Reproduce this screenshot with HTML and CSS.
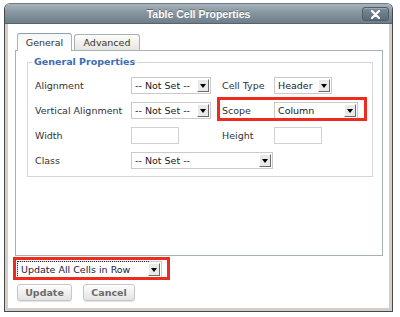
FILE: index.html
```html
<!DOCTYPE html>
<html>
<head>
<meta charset="utf-8">
<link rel="stylesheet" href="styles.css">
</head>
<body>
<div class="dialog">
  <div class="titlebar">
    <span></span>
    <div class="title">Table Cell Properties</div>
    <div class="close"><svg width="11" height="9" viewBox="0 0 11 9"><path d="M2 1 L9 8 M9 1 L2 8" stroke="#fff" stroke-width="2.2" stroke-linecap="round"/></svg></div>
  </div>
  <div class="body">
    <div class="tabs">
      <div class="tab active">General</div>
      <div class="tab">Advanced</div>
    </div>
    <div class="panel">
      <fieldset class="group">
        <legend>General Properties</legend>
        <div class="grid">
          <label>Alignment</label>
          <div class="select w80"><span>-- Not Set --</span><i></i></div>
          <label>Cell Type</label>
          <div class="select w58"><span>Header</span><i></i></div>

          <label>Vertical Alignment</label>
          <div class="select w80"><span>-- Not Set --</span><i></i></div>
          <div class="scope">
            <label>Scope</label>
            <div class="select w84"><span>Column</span><i></i></div>
          </div>

          <label>Width</label>
          <div class="input"></div>
          <label>Height</label>
          <div class="input"></div>

          <label>Class</label>
          <div class="select w142 span2"><span>-- Not Set --</span><i></i></div>
        </div>
      </fieldset>
    </div>
    <div class="footer">
      <div class="hl">
        <div class="select focus w145"><span>Update All Cells in Row</span><i></i></div>
      </div>
      <div class="buttons">
        <button class="btn w55">Update</button>
        <button class="btn w52">Cancel</button>
      </div>
    </div>
  </div>
</div>
</body>
</html>
```
FILE: styles.css
```css
body {
  margin: 0;
  background: #fff;
  font-family: "DejaVu Sans", Verdana, sans-serif;
  font-size: 9.5px;
  color: #333;
}
.dialog {
  width: 387px;
  margin: 3px 0 0 4px;
  border: 1px solid #45494c;
  border-top-color: #6f7b84;
  border-radius: 6px 6px 0 0;
  overflow: hidden;
}
.titlebar {
  height: 19px;
  border-bottom: 1px solid #55636d;
  background: linear-gradient(#a7b3bb, #8796a0 45%, #6e7e89);
  display: grid;
  grid-template-columns: 1fr auto 1fr;
  align-items: center;
}
.title {
  color: #fff;
  font: bold 10.5px "Liberation Sans", Arial, sans-serif;
  text-shadow: 0 -1px 0 rgba(0,0,0,.35);
}
.close {
  justify-self: end;
  margin-right: 3px;
  margin-top: 1px;
  width: 25px;
  height: 12px;
  border: 1px solid #4f5d67;
  border-radius: 3px;
  background: linear-gradient(#7d8d98, #5b6b76);
  box-shadow: inset 0 1px 0 rgba(255,255,255,.25);
  display: flex;
  align-items: center;
  justify-content: center;
}
.body {
  border: 3px solid #d6cec6;
  border-top: 0;
  padding: 9px 6px 7px 7px;
  background: #fff;
}
.tabs {
  display: flex;
  gap: 2px;
  padding-left: 2px;
  align-items: flex-end;
  height: 18px;
  margin-bottom: -1px;
  position: relative;
  z-index: 1;
}
.tab {
  box-sizing: border-box;
  width: 66px;
  height: 16px;
  margin-bottom: 1px;
  border: 1px solid #a6b3b5;
  border-bottom: 0;
  border-radius: 3px 3px 0 0;
  background: linear-gradient(#fdfdfc, #e7e5de);
  display: flex;
  align-items: center;
  justify-content: center;
  color: #333;
}
.tab.active {
  width: 55px;
  height: 18px;
  margin-bottom: 0;
  border-top-color: #8a9fb3;
  background: linear-gradient(#f6f7f8, #fff);
  padding-bottom: 1px;
}
.panel {
  box-sizing: border-box;
  height: 206px;
  border: 1px solid #a6b3b5;
  padding-top: 5px;
}
.group {
  margin: 0 9px 0 11px;
  border: 1px solid #d6d6d6;
  padding: 9px 7px 7px 7px;
  min-width: 0;
}
.group legend {
  padding: 0 2px;
  margin-left: -3px;
  line-height: 12px;
  font-weight: bold;
  color: #3b6db3;
}
.grid {
  display: grid;
  grid-template-columns: 96px 91px 52px auto;
  grid-auto-rows: 17px;
  row-gap: 8px;
  align-items: center;
}
.grid label {
  white-space: nowrap;
  color: #333;
}
.select {
  box-sizing: border-box;
  height: 17px;
  display: flex;
  border: 1px solid #cacaca;
  background: #fff;
}
.select span {
  flex: 1;
  padding-left: 3px;
  line-height: 15px;
  color: #222;
  white-space: nowrap;
  overflow: hidden;
}
.select i {
  box-sizing: border-box;
  width: 12px;
  margin: 1px 1px 1px 0;
  background: #e9e9e9;
  border-top: 1px solid #fff;
  border-left: 1px solid #fff;
  border-right: 1px solid #6c6c6c;
  border-bottom: 1px solid #6c6c6c;
  display: flex;
  align-items: center;
  justify-content: center;
}
.select i::after {
  content: "";
  border-top: 4px solid #000;
  border-left: 3px solid transparent;
  border-right: 3px solid transparent;
}
.w80 { width: 80px; }
.w58 { width: 58px; }
.w84 { width: 84px; }
.w142 { width: 142px; }
.w145 { width: 145px; }
.span2 { grid-column: 2 / 4; }
.input {
  box-sizing: border-box;
  width: 48px;
  height: 17px;
  border: 1px solid #d0d0d0;
  background: #fff;
}
.scope {
  grid-column: 3 / 5;
  justify-self: start;
  display: flex;
  align-items: center;
  position: relative;
}
.scope label { width: 52px; }
.scope::before,
.hl::before {
  content: "";
  position: absolute;
  border: 3px solid #ee2b1f;
}
.scope::before {
  left: -5px;
  right: -9px;
  top: -5px;
  bottom: -2px;
}
.footer {
  padding-top: 5px;
}
.hl {
  position: relative;
  width: 145px;
  margin-left: 2px;
}
.hl::before {
  left: -4px;
  right: -8px;
  top: -4px;
  bottom: -2px;
}
.select.focus span {
  outline: 1px dotted #333;
  outline-offset: 0;
  color: #1c2040;
}
.buttons {
  display: flex;
  gap: 11px;
  margin-top: 6px;
  padding-left: 2px;
}
.btn {
  box-sizing: border-box;
  height: 17px;
  padding: 0;
  border: 1px solid #c6c6c6;
  border-radius: 3px;
  background: linear-gradient(#fefefe, #e3e3e3);
  box-shadow: 0 1px 1px rgba(0,0,0,.12);
  font: bold 9.5px "DejaVu Sans", Verdana, sans-serif;
  color: #6a6a6a;
}
.w55 { width: 55px; }
.w52 { width: 52px; }
```
